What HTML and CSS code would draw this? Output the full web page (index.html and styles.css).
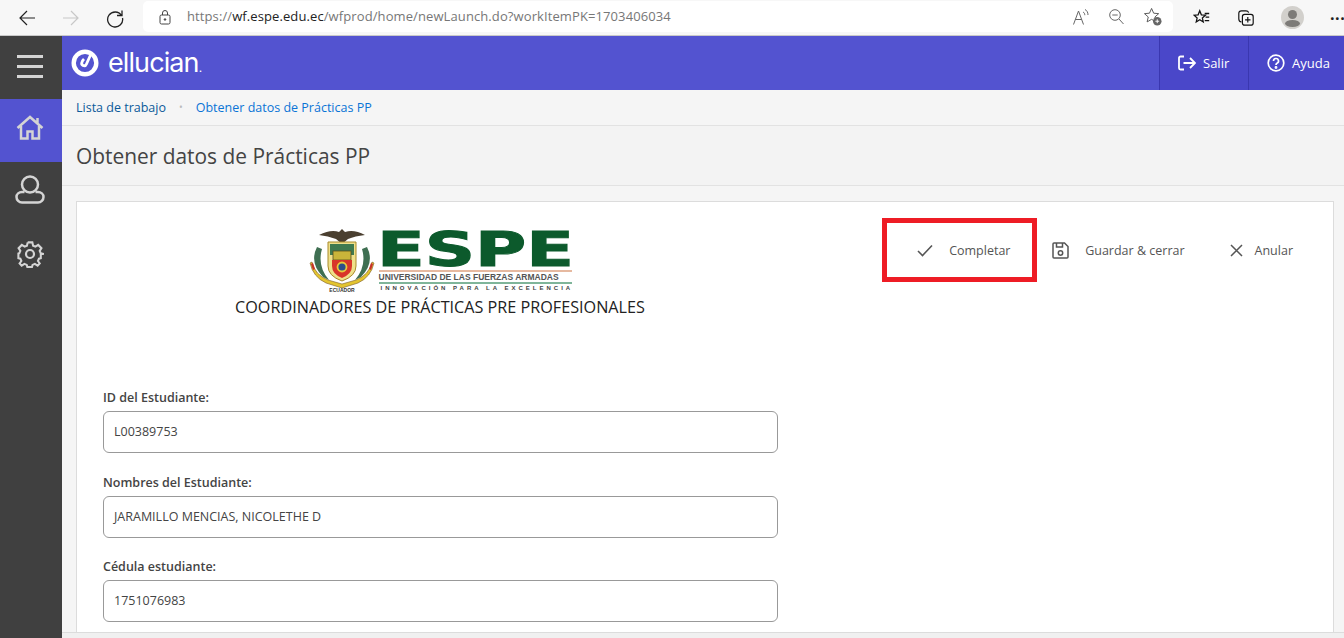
FILE: index.html
```html
<!DOCTYPE html>
<html lang="es">
<head>
  <meta charset="UTF-8">
  <title>Obtener datos de Prácticas PP</title>
  <link rel="stylesheet" href="styles.css">
</head>
<body>
  <div class="browser-bar">
    <svg class="nav-icon" width="20" height="20" viewBox="0 0 20 20" fill="none" stroke="#222" stroke-width="1.2"><path d="M18 10H3M10 3l-7 7 7 7"/></svg>
    <svg class="nav-icon" width="20" height="20" viewBox="0 0 20 20" fill="none" stroke="#c8c8c8" stroke-width="1.2"><path d="M2 10h15M10 3l7 7-7 7"/></svg>
    <svg class="nav-icon" width="20" height="20" viewBox="0 0 20 20" fill="none" stroke="#222" stroke-width="1.3"><path d="M16.5 7.5A7.5 7.5 0 1 0 17.5 10M17 2.5v5h-5"/></svg>
    <div class="address">
      <svg width="14" height="16" viewBox="0 0 14 16" fill="none" stroke="#444" stroke-width="1"><rect x="2" y="6" width="10" height="9" rx="1.5"/><path d="M4.5 6V4a2.5 2.5 0 0 1 5 0v2"/><circle cx="7" cy="10.5" r=".8" fill="#444"/></svg>
      <span class="url"><span class="url-dim">https://</span>wf.espe.edu.ec<span class="url-dim">/wfprod/home/newLaunch.do?workItemPK=1703406034</span></span>
      <div class="address-tools">
        <svg width="16" height="18" viewBox="0 0 16 18" fill="none" stroke="#666" stroke-width="1"><path d="M.5 16.500L5.500 3l5 13.500M2.300 11.500h6.400M10 4c1.300.6 1.800 1.800 1.800 3.200M12 1.500c2 1 3 3 3 5.500"/></svg>
        <svg width="15" height="16" viewBox="0 0 15 16" fill="none" stroke="#666" stroke-width="1"><circle cx="6" cy="6" r="5.300"/><path d="M3.300 6h5.400M10 10l4.500 5"/></svg>
        <svg width="18" height="19" viewBox="0 0 19 20" fill="none" stroke="#555" stroke-width="1"><path d="M8 1.500l2.200 5 5.300.5-4 3.500 1.200 5.200L8 13l-4.700 2.700L4.500 10.500l-4-3.500L5.800 6.500z"/><circle cx="14" cy="15" r="4.500" fill="#666" stroke="none"/><path d="M12 15h4M14 13v4" stroke="#fff"/></svg>
      </div>
    </div>
    <div class="browser-tools">
      <svg width="18" height="18" viewBox="0 0 20 20" fill="none" stroke="#111" stroke-width="1.400"><path d="M7.500 2l1.800 4.500 4.500.4-3.400 3 1 4.500-3.900-2.400-3.900 2.400 1-4.500-3.400-3 4.500-.4zM13 5h5M14 9h4M13 13h5"/></svg>
      <svg width="18" height="18" viewBox="0 0 20 20" fill="none" stroke="#111" stroke-width="1.300"><path d="M5 14.500C3 14 2 13 2 11V5c0-2 1-3 3-3h5c1.500 0 2.500.7 3 2"/><rect x="6" y="6" width="12" height="12" rx="2.500"/><path d="M12 9v6M9 12h6"/></svg>
      <div class="avatar"><span class="avatar-head"></span><span class="avatar-body"></span></div>
      <span class="more">···</span>
    </div>
  </div>

  <div class="app">
    <nav class="sidebar">
      <div class="side-item side-burger">
        <span class="burger"><i></i><i></i><i></i></span>
      </div>
      <div class="side-item side-active">
        <svg width="28" height="25" viewBox="0 0 28 25" fill="none" stroke="#d4d4d4" stroke-width="2.500"><path d="M1.500 13L14 2l12.500 11M5 11v12.500h6.500v-7h5v7H23V11M21.500 3v5"/></svg>
      </div>
      <div class="side-item side-person">
        <svg width="30" height="29" viewBox="0 0 30 29" fill="none" stroke="#d4d4d4" stroke-width="2.500"><circle cx="15" cy="9.500" r="8"/><path d="M9.500 17H7c-3 0-5.500 2-5.500 5s2.500 5.500 5.500 5.500h16c3 0 5.500-2.500 5.500-5.500s-2.500-5-5.500-5h-2.500"/></svg>
      </div>
      <div class="side-item">
        <svg width="28" height="28" viewBox="0 0 28 28" fill="none" stroke="#d4d4d4" stroke-width="2.200"><circle cx="14" cy="14" r="4"/><path d="M11.500 1.500h5l.8 3.500 2.500 1.100 3-1.900 3.500 3.500-1.900 3 1.100 2.500 3.500.8M11.500 1.500l-.8 3.500-2.500 1.100-3-1.900L1.700 7.700l1.900 3-1.100 2.500-1 .3v5l2.100.5 1.100 2.500-1.900 2.700 2.200 2.300 3-1.900 2.500 1.100.6 2.200h5l.6-2.200 2.500-1.100 3 1.900 2.200-2.300-1.900-2.700 1.100-2.500 2-.5v-5" transform="translate(1 1) scale(.93)"/></svg>
      </div>
    </nav>

    <div class="main">
      <header class="topbar">
        <div class="brand">
          <svg width="28" height="28" viewBox="0 0 28 28" fill="none" stroke="#fff"><circle cx="14" cy="14" r="11.300" stroke-width="4.400"/><path d="M19.500 6L15.500 15q-1 2.500-3.500 1.500-2-1-1-3.500.5-1.500 2-3" stroke-width="2.800"/></svg>
          <span class="brand-name">ellucian<small>.</small></span>
        </div>
        <div class="top-links">
          <a class="top-link top-out">
            <svg width="18" height="16" viewBox="0 0 18 16" fill="none" stroke="#fff" stroke-width="1.800"><path d="M6 1.500H2.500a1.500 1.500 0 0 0-1.500 1.500v10a1.500 1.500 0 0 0 1.500 1.500H6M5.500 8h11.500M12 3l5 5-5 5"/></svg>
            Salir
          </a>
          <a class="top-link top-help">
            <svg width="18" height="18" viewBox="0 0 18 18" fill="none" stroke="#fff" stroke-width="1.700"><circle cx="9" cy="9" r="7.800"/><path d="M6.500 7a2.500 2.500 0 1 1 3.500 2.300c-.7.400-1 .8-1 1.700"/><circle cx="9" cy="13.500" r=".6" fill="#fff"/></svg>
            Ayuda
          </a>
        </div>
      </header>

      <div class="crumbs">
        <a class="crumb-first">Lista de trabajo</a>
        <span class="crumb-dot">•</span>
        <a class="crumb-last">Obtener datos de Prácticas PP</a>
      </div>

      <div class="page-title"><h1>Obtener datos de Prácticas PP</h1></div>

      <section class="card">
        <div class="card-head">
          <div class="letterhead">
            <div class="logo">
              <svg class="crest" width="66" height="66" viewBox="0 0 66 66">
                <path d="M10 8q12-6 20-3l3-3 3 3q9-3 20 3-10 1-17 4l-6 5-6-5q-8-3-17-4z" fill="#4a3f30"/>
                <path d="M8 20q-8 16 6 30l6 3q-12-14-7-31z" fill="#3f6f52"/>
                <path d="M58 20q8 16-6 30l-6 3q12-14 7-31z" fill="#3f6f52"/>
                <path d="M1 36q3 14 16 20l16 5 16-5q13-6 16-20l-2-1q-3 13-16 18l-14 4-14-4Q6 48 3 35z" fill="#e3c42f" stroke="#7a5a2a" stroke-width=".6"/>
                <path d="M2 37l2-1 2 6-2 1zM64 37l-2-1-2 6 2 1z" fill="#c8322a"/>
                <path d="M19 15h28v24q0 10-14 15-14-5-14-15z" fill="#efe08a" stroke="#a98a2a"/>
                <rect x="21" y="17" width="24" height="11" fill="#3f7a50"/>
                <rect x="24" y="24" width="18" height="9" fill="#c9b53a" stroke="#5a5020" stroke-width=".8"/>
                <path d="M23 33h20v6q0 8-10 12-10-4-10-12z" fill="#d8352a"/>
                <circle cx="33" cy="40" r="4.500" fill="#2d4f8a" stroke="#e8c93a" stroke-width="1.800"/>
                <text class="crest-label" x="33" y="65" text-anchor="middle">ECUADOR</text>
              </svg>
              <div class="logo-text">
                <svg class="espe-word" width="193" height="39" viewBox="0 0 193 39"><text x="-2" y="36" textLength="197" lengthAdjust="spacingAndGlyphs">ESPE</text></svg>
                <div class="logo-rule-a"></div>
                <div class="logo-uni">UNIVERSIDAD DE LAS FUERZAS ARMADAS</div>
                <div class="logo-rule-b"></div>
                <div class="logo-motto">INNOVACIÓN PARA LA EXCELENCIA</div>
              </div>
            </div>
            <p class="coord">COORDINADORES DE PRÁCTICAS PRE PROFESIONALES</p>
          </div>
          <div class="actions">
            <a class="action action-done">
              <svg width="16" height="13" viewBox="0 0 16 13" fill="none" stroke="#555" stroke-width="1.600"><path d="M1 7l4.500 4.500L15 1.500"/></svg>
              Completar
            </a>
            <a class="action action-save">
              <svg width="17" height="17" viewBox="0 0 17 17" fill="none" stroke="#555" stroke-width="1.500"><path d="M1 2a1 1 0 0 1 1-1h10.500L16 4.500V15a1 1 0 0 1-1 1H2a1 1 0 0 1-1-1zM4.500 1v4h6V1"/><circle cx="8.500" cy="11" r="2.200"/></svg>
              Guardar &amp; cerrar
            </a>
            <a class="action action-cancel">
              <svg width="13" height="13" viewBox="0 0 13 13" fill="none" stroke="#555" stroke-width="1.500"><path d="M1 1l11 11M12 1L1 12"/></svg>
              Anular
            </a>
          </div>
        </div>

        <div class="fields">
          <div class="field">
            <label>ID del Estudiante:</label>
            <div class="input">L00389753</div>
          </div>
          <div class="field">
            <label>Nombres del Estudiante:</label>
            <div class="input">JARAMILLO MENCIAS, NICOLETHE D</div>
          </div>
          <div class="field">
            <label>Cédula estudiante:</label>
            <div class="input">1751076983</div>
          </div>
        </div>
      </section>
      <div class="page-end"></div>
    </div>
  </div>
</body>
</html>
```

FILE: styles.css
```css
* {
  box-sizing: border-box;
}
html, body {
  height: 100%;
}
body {
  margin: 0;
  font-family: "Open Sans", sans-serif;
  color: #333;
  overflow: hidden;
  background: #f5f5f5;
}

/* browser chrome */
.browser-bar {
  height: 36px;
  background: #f7f7f7;
  border-bottom: 1px solid #c9c9c9;
  display: flex;
  align-items: center;
  padding-left: 17px;
}
.nav-icon {
  margin-right: 24px;
  flex: none;
}
.nav-icon:nth-child(3) {
  margin-right: 18px;
}
.address {
  flex: none;
  width: 1030px;
  height: 31px;
  margin-top: -2px;
  background: #fff;
  border-radius: 5px;
  display: flex;
  align-items: center;
  padding: 0 11px 0 15px;
}
.url {
  margin: 0 0 2px 15px;
  font-size: 13px;
  letter-spacing: 0.1px;
  color: #222;
  white-space: nowrap;
}
.url-dim {
  color: #777;
}
.address-tools {
  margin-left: auto;
  display: flex;
  align-items: center;
  gap: 20px;
}
.browser-tools {
  flex: 1;
  min-width: 0;
  display: flex;
  align-items: center;
  padding-left: 20px;
  gap: 26px;
}
.browser-tools svg {
  flex: none;
}
.avatar {
  width: 23px;
  height: 23px;
  border-radius: 50%;
  background: #d2d0cc;
  overflow: hidden;
  position: relative;
  flex: none;
}
.avatar-head {
  position: absolute;
  left: 7px;
  top: 4px;
  width: 9px;
  height: 9px;
  border-radius: 50%;
  background: #7d7b78;
}
.avatar-body {
  position: absolute;
  left: 4px;
  top: 14px;
  width: 15px;
  height: 7px;
  border-radius: 50%;
  background: #7d7b78;
}
.more {
  font-size: 16px;
  font-weight: 700;
  color: #222;
  letter-spacing: 0.5px;
  white-space: nowrap;
}

/* app */
.app {
  display: flex;
  height: 602px;
}
.sidebar {
  width: 62px;
  flex: none;
  background: #404040;
}
.side-item {
  height: 63px;
  display: flex;
  align-items: center;
  justify-content: center;
  padding: 0 3px 6px 0;
}
.side-burger {
  padding-bottom: 3px;
}
.side-person {
  padding-bottom: 8px;
}
.side-active {
  background: #5353d0;
}
.burger {
  display: flex;
  flex-direction: column;
  gap: 7px;
  width: 26px;
}
.burger i {
  display: block;
  height: 3px;
  background: #d4d4d4;
}
.main {
  flex: 1;
  min-width: 0;
  display: flex;
  flex-direction: column;
}
.topbar {
  height: 54px;
  flex: none;
  background: #5353d0;
  display: flex;
  justify-content: space-between;
  color: #fff;
}
.brand {
  display: flex;
  align-items: center;
  padding-left: 9px;
  gap: 9px;
}
.brand-name {
  font-family: "Inter", "Liberation Sans", sans-serif;
  font-size: 27px;
  font-weight: 400;
  letter-spacing: -0.9px;
  line-height: 1;
  margin-top: -1px;
}
.brand-name small {
  font-size: 12px;
}
.top-links {
  display: flex;
}
.top-link {
  display: flex;
  align-items: center;
  gap: 7px;
  background: #4a47c9;
  border-left: 1px solid #3a37b0;
  font-size: 13px;
  padding-left: 18px;
}
.top-out {
  width: 89px;
}
.top-help {
  width: 96px;
}
.crumbs {
  height: 36px;
  flex: none;
  border-bottom: 1px solid #e2e2e2;
  background: #f5f5f5;
  display: flex;
  align-items: center;
  padding-left: 14px;
  font-size: 12.500px;
  padding-bottom: 1px;
}
.crumb-first {
  color: #0b5a9a;
}
.crumb-dot {
  color: #bbb;
  margin: 0 13px;
  font-size: 10px;
}
.crumb-last {
  color: #0a74d6;
}
.page-title {
  height: 60px;
  flex: none;
  background: #f3f3f3;
  border-bottom: 1px solid #e2e2e2;
  display: flex;
  align-items: center;
  padding-left: 14px;
}
.page-title h1 {
  margin: 0;
  font-size: 20.900px;
  font-weight: 400;
  color: #444;
}

/* form card */
.card {
  flex: 1;
  min-height: 0;
  margin: 15px 10px 0 14px;
  background: #fff;
  border: 1px solid #dcdcdc;
  border-bottom: 0;
  padding: 0 26px;
  overflow: hidden;
}
.card-head {
  display: flex;
  justify-content: space-between;
  height: 187px;
}
.letterhead {
  width: 674px;
  display: flex;
  flex-direction: column;
  align-items: center;
  padding-top: 25px;
}
.logo {
  display: flex;
  height: 66px;
  gap: 4px;
  align-items: flex-start;
}
.crest-label {
  font-family: "Liberation Sans", sans-serif;
  font-size: 5px;
  font-weight: 700;
  fill: #333;
}
.logo-text {
  width: 193px;
}
.espe-word {
  display: block;
  overflow: visible;
  margin-top: 3px;
}
.espe-word text {
  font-family: "DejaVu Sans", sans-serif;
  font-weight: 700;
  font-size: 48px;
  fill: #0c5a2c;
  stroke: #0c5a2c;
  stroke-width: 1px;
}
.logo-rule-a {
  height: 2px;
  margin-top: 1px;
  background: #e6b9a0;
}
.logo-uni {
  font-family: "Liberation Sans", sans-serif;
  font-size: 8.500px;
  font-weight: 700;
  color: #555;
  white-space: nowrap;
  line-height: 10px;
}
.logo-rule-b {
  height: 2px;
  background: #7fb59a;
}
.logo-motto {
  font-family: "Liberation Sans", sans-serif;
  font-size: 6px;
  font-weight: 700;
  color: #444;
  white-space: nowrap;
  letter-spacing: 3px;
  line-height: 9px;
  padding-left: 2px;
}
.coord {
  margin: 4px 0 0;
  font-size: 16.200px;
  line-height: 20px;
  color: #222;
  white-space: nowrap;
}
.actions {
  display: flex;
  align-items: flex-start;
  padding-top: 16px;
  margin-right: 14px;
}
.action {
  display: flex;
  align-items: center;
  height: 64px;
  font-size: 12.500px;
  color: #555;
  white-space: nowrap;
}
.action-done {
  width: 155px;
  border: 5px solid #ee1c25;
  padding-left: 30px;
  gap: 16px;
}
.action-save {
  margin-left: 15px;
  gap: 16px;
}
.action-cancel {
  margin-left: 45px;
  gap: 12px;
}
.fields {
  width: 675px;
  display: flex;
  flex-direction: column;
  gap: 20.500px;
}
.field label {
  display: block;
  font-size: 12.500px;
  font-weight: 600;
  line-height: 17px;
  margin-bottom: 5px;
  color: #444;
}
.input {
  height: 42px;
  border: 1px solid #999;
  border-radius: 6px;
  display: flex;
  align-items: center;
  padding: 0 0 1px 10px;
  font-size: 12.500px;
  color: #444;
  background: #fff;
}
.page-end {
  height: 6px;
  flex: none;
  background: #f0f0f0;
  border-top: 1px solid #dcdcdc;
}
```
